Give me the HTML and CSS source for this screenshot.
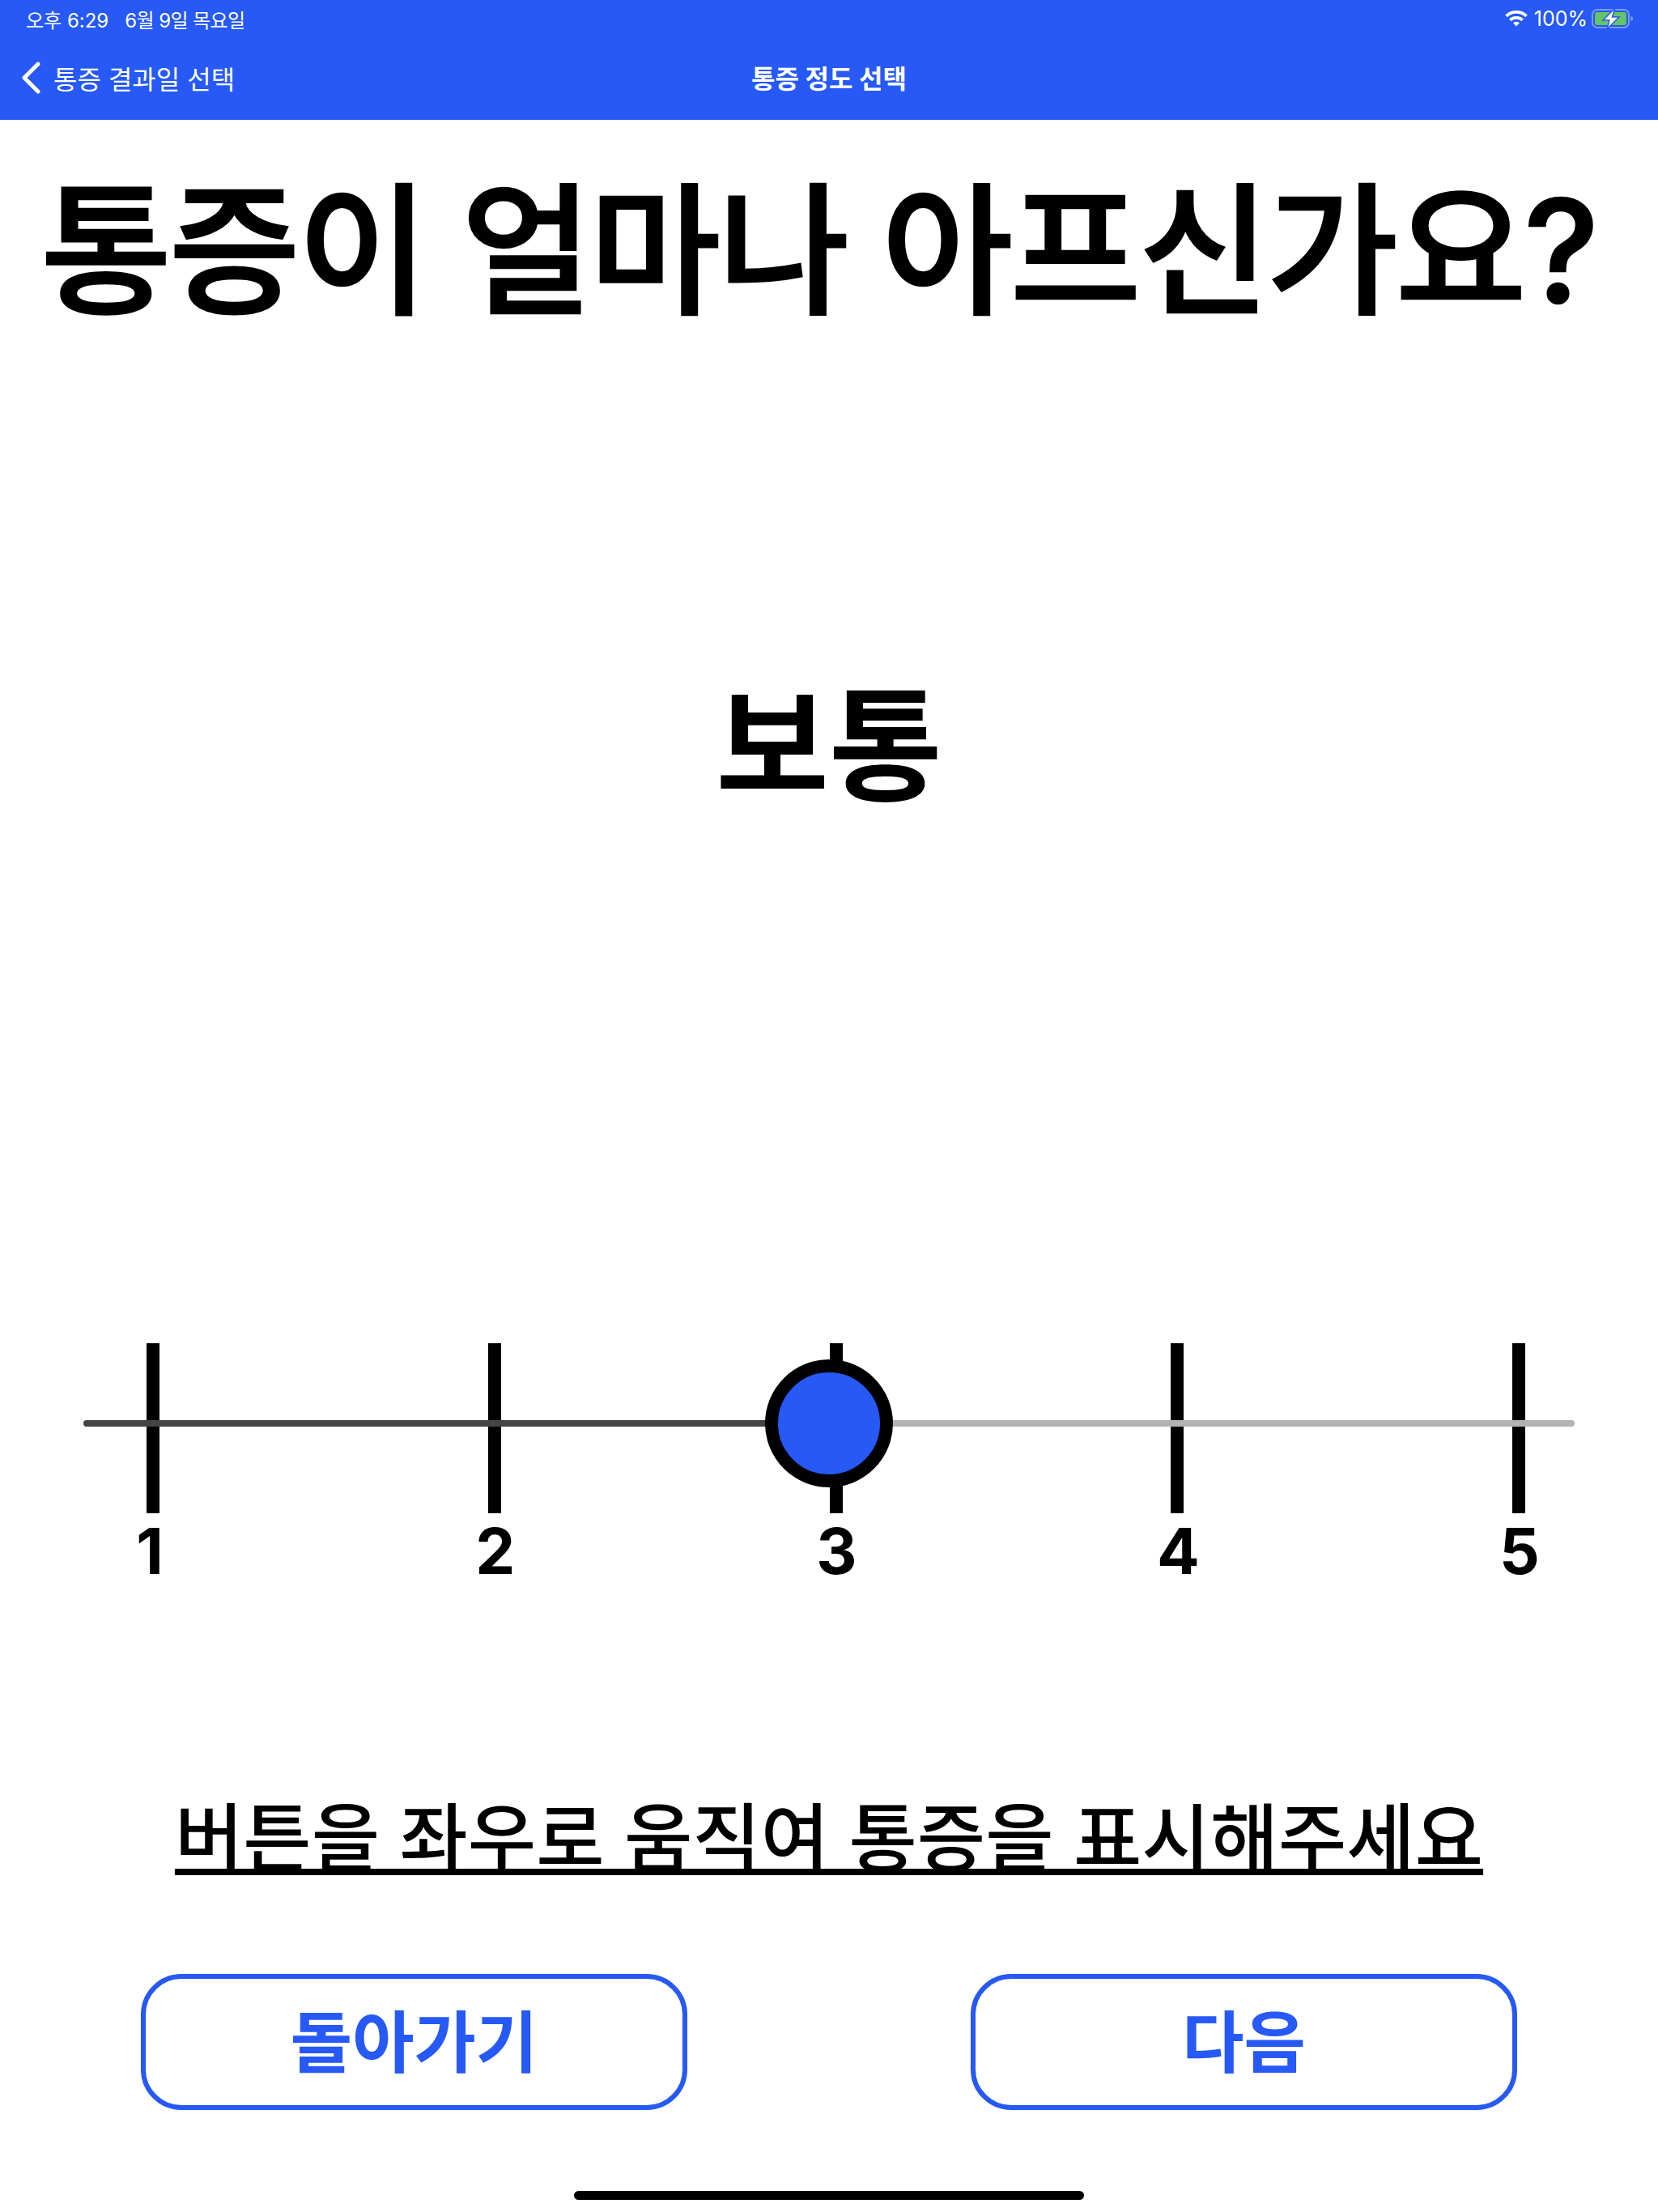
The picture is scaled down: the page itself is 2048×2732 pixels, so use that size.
FILE: index.html
```html
<!DOCTYPE html>
<html lang="ko">
<head>
<meta charset="utf-8">
<title>통증 정도 선택</title>
<link rel="stylesheet" href="styles.css">
</head>
<body>
<div class="page">
  <header class="header">
    <div class="status">
      <div class="status-left"><span>오후 6:29</span><span class="date">6월 9일 목요일</span></div>
      <div class="status-right">
        <svg class="wifi" width="28" height="20" viewBox="0 0 28 20"><path d="M14 19.500l-4 -4.200a6 6 0 0 1 8 0z M7.600 13.200a9.800 9.800 0 0 1 12.800 0l2.600 -2.700a13.600 13.600 0 0 0 -18 0z M2.800 8.200a16.600 16.600 0 0 1 22.400 0l2.600 -2.700a20.400 20.400 0 0 0 -27.600 0z" fill="#fff"/></svg>
        <span class="pct">100%</span>
        <svg class="battery" width="52" height="26" viewBox="0 0 52 26">
          <rect x="1" y="2" width="45" height="22" rx="6" fill="none" stroke="#fff" stroke-opacity=".4" stroke-width="2"/>
          <rect x="4" y="5" width="39" height="16" rx="3" fill="#65c466"/>
          <path d="M48.500 10c2 .6 2.500 1.800 2.500 3s-.5 2.400-2.500 3z" fill="#fff" fill-opacity=".45"/>
          <path d="M29 0L14 15h8l-3 11 15-15h-8.500z" fill="#fff" stroke="#2659f5" stroke-width="1.500"/>
        </svg>
      </div>
    </div>
    <nav class="nav">
      <div class="back">
        <svg width="24" height="40" viewBox="0 0 24 40"><path d="M21 3L4 20l17 17" fill="none" stroke="#fff" stroke-width="5" stroke-linecap="round" stroke-linejoin="round"/></svg>
        <span>통증 결과일 선택</span>
      </div>
      <div class="nav-title">통증 정도 선택</div>
    </nav>
  </header>
  <main class="main">
    <h1 class="title">통증이 얼마나 아프신가요?</h1>
    <div class="level">보통</div>
    <div class="slider">
      <div class="track"><div class="track-done"></div><div class="track-rest"></div></div>
      <div class="ticks">
        <div class="tick"><i></i><b>1</b></div>
        <div class="tick"><i></i><b>2</b></div>
        <div class="tick"><i></i><b>3</b></div>
        <div class="tick"><i></i><b>4</b></div>
        <div class="tick"><i></i><b>5</b></div>
      </div>
      <div class="thumb"></div>
    </div>
    <p class="hint">버튼을 좌우로 움직여 통증을 표시해주세요</p>
    <div class="actions">
      <button class="btn">돌아가기</button>
      <button class="btn">다음</button>
    </div>
    <div class="home"></div>
  </main>
</div>
</body>
</html>
```
FILE: styles.css
```css
* { box-sizing: border-box; }
html, body { margin: 0; padding: 0; background: #fff; }
body { font-family: Inter, "Noto Sans CJK KR", sans-serif; color: #000; }
.page { width: 2048px; height: 2732px; display: flex; flex-direction: column; overflow: hidden; }
.header { height: 148px; background: #2659f5; color: #fff; display: flex; flex-direction: column; }
.status { height: 46px; padding: 0 30px 0 32px; display: flex; justify-content: space-between; align-items: center; font-size: 24px; }
.status-left { display: flex; gap: 20px; }
.date { letter-spacing: -0.6px; }
.status-right { display: flex; align-items: center; gap: 8px; }
.pct { font-size: 25px; margin-right: -3px; }
.nav { flex: 1; position: relative; display: flex; align-items: center; justify-content: center; padding-bottom: 4px; }
.back { position: absolute; left: 26px; top: 50%; transform: translateY(-52%); display: flex; align-items: center; gap: 16px; font-size: 32px; }
.nav-title { font-size: 32px; font-weight: 700; }
.main { flex: 1; display: flex; flex-direction: column; align-items: center; }
.title { margin: 52px 26px 0 0; font-size: 176px; letter-spacing: -3.3px; line-height: 220px; font-weight: 500; -webkit-text-stroke: 2.500px #000; white-space: nowrap; }
.level { margin-top: 417px; font-size: 152px; line-height: 170px; font-weight: 700; }
.slider { position: relative; margin-top: 652px; width: 2048px; height: 290px; padding: 0 144px 0 161px; }
.track { position: absolute; left: 103px; right: 103px; top: 95px; height: 8px; display: flex; border-radius: 4px; overflow: hidden; }
.track-done { width: 50%; background: #444; }
.track-rest { flex: 1; background: #b2b2b2; }
.ticks { display: flex; justify-content: space-between; }
.tick { width: 56px; display: flex; flex-direction: column; align-items: center; }
.tick i { width: 16px; height: 210px; background: #000; }
.tick b { padding-left: 2px; font-size: 78px; line-height: 94px; font-weight: 700; }
.tick:first-child b { margin-left: -10px; }
.thumb { position: absolute; left: 945px; top: 20px; width: 158px; height: 158px; border-radius: 50%; background: #2659f5; border: 16px solid #000; }
.hint { margin: 262px 0 4px; font-size: 91.700px; line-height: 120px; font-weight: 500; text-decoration: underline; text-decoration-thickness: 8px; text-decoration-skip-ink: none; white-space: nowrap; }
.actions { margin-top: 103px; width: 1700px; display: flex; justify-content: space-between; }
.btn { width: 675px; height: 168px; padding: 0 0 10px; border: 6px solid #2659f5; border-radius: 50px; background: #fff; color: #2659f5; font: 700 83px "Inter", "Noto Sans CJK KR", sans-serif; }
.home { margin-top: 100px; width: 630px; height: 11px; border-radius: 6px; background: #000; }
```
